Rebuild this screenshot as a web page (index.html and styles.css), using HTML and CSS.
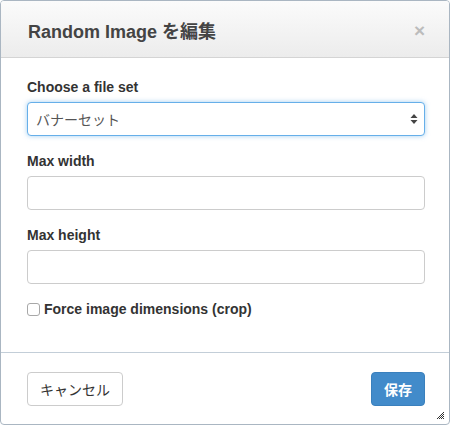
FILE: index.html
```html
<!DOCTYPE html>
<html>
<head>
<meta charset="utf-8">
<link rel="stylesheet" href="styles.css">
</head>
<body>
<div class="dialog">
  <div class="header">
    <h3 class="title">Random Image を編集</h3>
    <span class="close">×</span>
  </div>
  <div class="body">
    <div class="group">
      <label class="lbl">Choose a file set</label>
      <div class="select">
        <span>バナーセット</span>
        <svg class="arrows" width="8" height="12" viewBox="0 0 8 12"><path d="M4 1 L7.5 5 H0.5 Z M4 11 L7.5 7 H0.5 Z" fill="#444"/></svg>
      </div>
    </div>
    <div class="group">
      <label class="lbl">Max width</label>
      <div class="input"></div>
    </div>
    <div class="group">
      <label class="lbl">Max height</label>
      <div class="input"></div>
    </div>
    <div class="check">
      <span class="box"></span>
      <span class="lbl">Force image dimensions (crop)</span>
    </div>
  </div>
  <div class="footer">
    <button class="btn cancel">キャンセル</button>
    <button class="btn save">保存</button>
  </div>
  <svg class="grip" width="9" height="9" viewBox="0 0 9 9"><path d="M8 1 L1 8 M8 3 L3 8 M8 5 L5 8 M8 7 L7 8" stroke="#333" stroke-width="1"/></svg>
</div>
</body>
</html>
```
FILE: styles.css
```css
html, body { margin: 0; padding: 0; background: #fff; }
body { font-family: "Liberation Sans", Arial, "Noto Sans CJK JP", sans-serif; color: #333; }
.dialog {
  position: relative;
  width: 450px;
  height: 425px;
  border: 1px solid #aab6c2;
  border-radius: 4px;
  box-sizing: border-box;
  overflow: hidden;
  display: flex;
  flex-direction: column;
}
.header {
  height: 57px;
  flex: none;
  box-sizing: border-box;
  border-bottom: 1px solid #d4d4d4;
  background: linear-gradient(#fbfbfb, #ececec);
  display: flex;
  align-items: center;
  justify-content: space-between;
  padding: 0 24px 0 27px;
}
.title { margin: 0; font-size: 18px; font-weight: bold; color: #444; padding-top: 2px; }
.close { font-size: 19px; font-weight: bold; color: #bcbcbc; padding-top: 4px; }
.body { padding: 19px 24px 0 26px; flex: 1; }
.group { margin-bottom: 15px; }
.lbl { display: block; font-size: 14px; line-height: 20px; font-weight: bold; color: #333; margin-bottom: 5px; }
.select, .input {
  height: 34px;
  box-sizing: border-box;
  border: 1px solid #ccc;
  border-radius: 4px;
  background: #fff;
}
.select {
  border-color: #66afe9;
  box-shadow: 0 0 5px rgba(102,175,233,.6);
  display: flex;
  align-items: center;
  justify-content: space-between;
  padding: 0 6px 0 8px;
  font-size: 14px;
  color: #555;
}
.check { display: flex; align-items: center; }
.check .lbl { margin: 0; }
.box {
  width: 11px; height: 11px;
  border: 1px solid #a8a8a8;
  border-radius: 3px;
  margin: 0 4px 0 0;
}
.footer {
  height: 72px;
  flex: none;
  box-sizing: border-box;
  border-top: 1px solid #c3ced8;
  display: flex;
  justify-content: space-between;
  align-items: flex-start;
  padding: 19px 24px 0 26px;
}
.btn {
  height: 34px;
  border-radius: 4px;
  font-family: "Liberation Sans", Arial, "Noto Sans CJK JP", sans-serif;
  font-size: 14px;
  padding: 0 12px;
}
.cancel { background: #fff; border: 1px solid #ccc; color: #333; width: 96px; }
.save { background: #428bca; border: 1px solid #3a80bd; color: #fff; font-weight: bold; width: 54px; }
.grip { position: absolute; right: 4px; bottom: 4px; }
```
